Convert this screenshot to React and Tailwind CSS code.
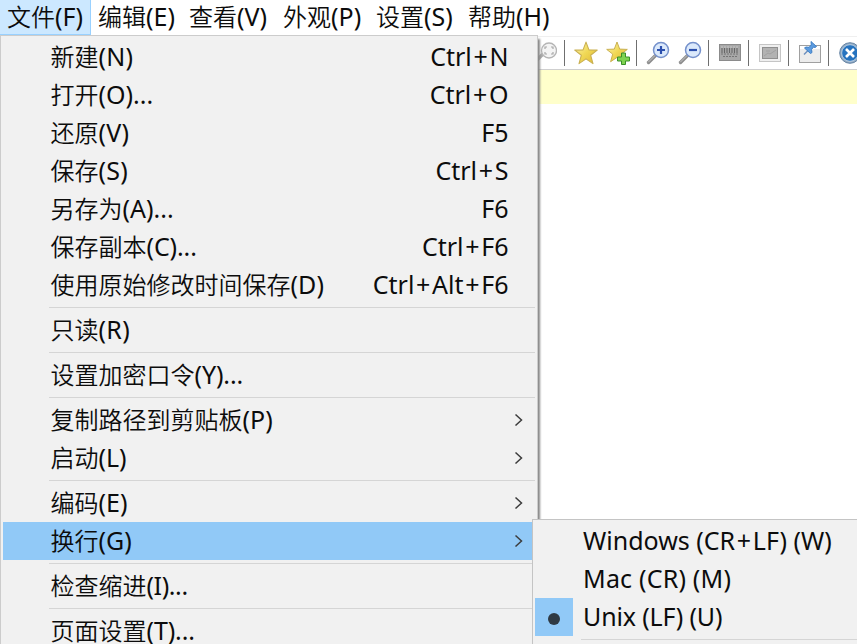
import React from 'react';

const font = "font-['Noto_Sans','Noto_Sans_CJK_SC',sans-serif]";

const menus = [
  { cjk: '文件', key: '(F)', box: 'w-[91px] pl-[7px] bg-[#cce8ff] border-r border-b border-[#99d1ff]' },
  { cjk: '编辑', key: '(E)', box: 'w-[91px] pl-[7px]' },
  { cjk: '查看', key: '(V)', box: 'w-[94px] pl-[7px]' },
  { cjk: '外观', key: '(P)', box: 'w-[93px] pl-[7px]' },
  { cjk: '设置', key: '(S)', box: 'w-[92px] pl-[7px]' },
  { cjk: '帮助', key: '(H)', box: 'w-[96px] pl-[7px]' },
];

const items = [
  { cjk: '新建', key: '(N)', shortcut: 'Ctrl+N', track: 'tracking-[0.3px]' },
  { cjk: '打开', key: '(O)...', shortcut: 'Ctrl+O' },
  { cjk: '还原', key: '(V)', shortcut: 'F5', track: 'tracking-[0.3px]' },
  { cjk: '保存', key: '(S)', shortcut: 'Ctrl+S', track: 'tracking-[0.2px]' },
  { cjk: '另存为', key: '(A)...', shortcut: 'F6' },
  { cjk: '保存副本', key: '(C)...', shortcut: 'Ctrl+F6', track: 'tracking-[-0.1px]' },
  { cjk: '使用原始修改时间保存', key: '(D)', shortcut: 'Ctrl+Alt+F6', track: 'tracking-[0.1px]' },
  null,
  { cjk: '只读', key: '(R)', track: 'tracking-[0.3px]' },
  null,
  { cjk: '设置加密口令', key: '(Y)...', track: 'tracking-[-0.1px]' },
  null,
  { cjk: '复制路径到剪贴板', key: '(P)', sub: true, track: 'tracking-[0.1px]' },
  { cjk: '启动', key: '(L)', sub: true },
  null,
  { cjk: '编码', key: '(E)', sub: true },
  { cjk: '换行', key: '(G)', sub: true, active: true },
  null,
  { cjk: '检查缩进', key: '(I)...', track: 'tracking-[-0.4px]' },
  null,
  { cjk: '页面设置', key: '(T)...', track: 'tracking-[-0.1px]' },
];

function Label({ cjk, k, track = 'tracking-normal' }) {
  return (
    <span className="whitespace-nowrap">
      <span className="font-['Noto_Sans_CJK_SC',sans-serif] font-[350]">{cjk}</span>
      <span className={'text-[25px] ' + track}>{k}</span>
    </span>
  );
}

// The plus sign takes a wider cell than the letters beside it.
function Wide({ text }) {
  return text.split('+').map((part, i) => (
    <React.Fragment key={i}>
      {i > 0 && <span className="mx-[1.7px]">+</span>}
      {part}
    </React.Fragment>
  ));
}

function Star() {
  return (
    <path d="M11 1l2.700 7.100 7.600.3-6 4.700 2.100 7.600-6.400-4.300-6.400 4.300 2.100-7.600-6-4.700 7.600-.3z" fill="url(#gold)" stroke="#c9b052" strokeWidth="1" strokeLinejoin="round" />
  );
}

function Magnifier({ plus }) {
  return (
    <svg className="size-6 shrink-0" viewBox="0 0 24 24">
      <path d="M2.500 21.500l7-7" stroke="#8d8d8d" strokeWidth="3.400" strokeLinecap="round" />
      <path d="M2.500 21l6.500-6.500" stroke="#c5c5c5" strokeWidth="1" strokeLinecap="round" />
      <circle cx="15" cy="9" r="7.500" fill="#dbe9fb" stroke="#7591cc" strokeWidth="1.500" />
      <path d={plus ? 'M11 9h8M15 5v8' : 'M11 9h8'} stroke="#2b4fae" strokeWidth="2.200" />
    </svg>
  );
}

function Divider() {
  return <div className="h-[26px] w-px shrink-0 bg-[#6f6f6f]" />;
}

function Toolbar() {
  return (
    <div className="flex h-[34px] items-center border-t border-b border-t-[#efefef] border-b-[#cfcfcf] bg-white pl-[533px]">
      <svg className="size-6 shrink-0" viewBox="0 0 24 24">
        <path d="M2 21l8-8" stroke="#aaa" strokeWidth="3.400" strokeLinecap="round" />
        <circle cx="16" cy="9.500" r="7.500" fill="#f4f4f4" stroke="#b5b5b5" strokeWidth="1.300" />
        <path d="M12 8V6h2M18 6h2v2M20 11v2h-2M14 13h-2v-2" fill="none" stroke="#a8a8a8" strokeWidth="1.200" />
      </svg>
      <div className="ml-[7px] flex"><Divider /></div>
      <svg className="ml-[9px] size-[24px] shrink-0" viewBox="0 0 22 22">
        <defs>
          <linearGradient id="gold" x1="0" y1="0" x2="1" y2="1">
            <stop offset="0" stopColor="#fdf5b4" />
            <stop offset=".5" stopColor="#f0d855" />
            <stop offset="1" stopColor="#dfb733" />
          </linearGradient>
        </defs>
        <Star />
      </svg>
      <svg className="ml-[8px] size-6 shrink-0" viewBox="0 0 24 24">
        <Star />
        <path d="M15.500 12h4v4h4v4h-4v3.500h-4V20h-4v-4h4z" fill="#7fd350" stroke="#3a9029" />
      </svg>
      <div className="ml-[6px] flex"><Divider /></div>
      <div className="ml-[9px] flex"><Magnifier plus /></div>
      <div className="ml-[8px] flex"><Magnifier /></div>
      <div className="ml-[6px] flex"><Divider /></div>
      <svg className="ml-[10px] h-[18px] w-[22px] shrink-0" viewBox="0 0 22 18">
        <rect x=".5" y=".5" width="21" height="16" fill="#a8a8a8" stroke="#8b8b8b" />
        <path d="M3 4v5M5.500 4v5M8 4v5M10.500 4v5M13 4v5M15.500 4v5M18 4v5" stroke="#666" strokeWidth="1.100" />
        <path d="M2 10h18M4 12.500h14" stroke="#757575" strokeDasharray="2 1" />
        <path d="M2 3h18" stroke="#c5c5c5" strokeDasharray="2 1" />
      </svg>
      <div className="ml-[7px] flex"><Divider /></div>
      <svg className="ml-[10px] h-[19px] w-[23px] shrink-0" viewBox="0 0 23 19">
        <rect x=".5" y=".5" width="21" height="17" fill="#efefef" stroke="#c5c5c5" />
        <rect x="3.500" y="3.500" width="15" height="11" fill="#b2b2b2" stroke="#8f8f8f" />
        <path d="M5 12l4-3 2 1 6-4M7 7h4" fill="none" stroke="#a0a0a0" />
      </svg>
      <div className="ml-[6px] flex"><Divider /></div>
      <svg className="ml-[10px] h-6 w-[23px] shrink-0" viewBox="0 0 23 24">
        <rect x=".5" y="4.500" width="21" height="17" fill="#ececec" stroke="#a0a0a0" />
        <path d="M1 5h20v3H1z" fill="#fff" />
        <path d="M5 13.500l5-5" stroke="#6b8fbd" strokeWidth="1.500" />
        <path d="M12 0.500l5.500 5-1.500 1-1.500-.5-2 2.500.5 3-1.500 1L5.500 7l1.500-1 3 .3L12.300 4z" fill="#5b9be0" stroke="#3f7fc4" strokeLinejoin="round" />
      </svg>
      <div className="ml-[6px] flex"><Divider /></div>
      <svg className="ml-[10px] size-[22px] shrink-0" viewBox="0 0 22 22">
        <circle cx="11" cy="11" r="10.300" fill="#8fa9c3" stroke="#6684a4" />
        <circle cx="11" cy="11" r="8.300" fill="#2673bf" stroke="#d2e2f0" strokeWidth=".7" />
        <path d="M7 7l8 8M15 7l-8 8" stroke="#fff" strokeWidth="2.600" />
      </svg>
    </div>
  );
}

function MenuRow({ item }) {
  if (!item) {
    return (
      <div className="flex h-[7px] shrink-0 items-center pl-[46px]">
        <div className="h-px grow bg-[#d5d5d5]" />
      </div>
    );
  }
  return (
    <div className={'flex h-[38px] shrink-0 items-center pl-[47.5px] ' + (item.active ? 'bg-[#91c9f7]' : '')}>
      <div className="pb-[2px]">
        <Label cjk={item.cjk} k={item.key} track={item.track} />
      </div>
      {item.shortcut && (
        <span className="mr-[26.5px] ml-auto pb-[2px] text-[25px]"><Wide text={item.shortcut} /></span>
      )}
      {item.sub && (
        <svg className="mr-[12px] ml-auto h-[14px] w-[9px]" viewBox="0 0 9 14">
          <path d="M1.500 1.500L7.500 7l-6 5.500" fill="none" stroke="#3c3c3c" strokeWidth="1.500" />
        </svg>
      )}
    </div>
  );
}

const endings = [
  { text: 'Windows (CR+LF) (W)', track: 'tracking-normal' },
  { text: 'Mac (CR) (M)', track: 'tracking-[0.2px]' },
  { text: 'Unix (LF) (U)', track: 'tracking-[-0.150px]', checked: true },
];

export default function App() {
  return (
    <div className={'relative h-[644px] w-[857px] overflow-hidden bg-white text-[24px] leading-[34px] text-[#0c0c0c] ' + font}>
      <div className="flex h-[36px]">
        {menus.map((m) => (
          <div key={m.cjk} className={'h-[35px] shrink-0 leading-[32px] ' + m.box}>
            <Label cjk={m.cjk} k={m.key} />
          </div>
        ))}
      </div>
      <Toolbar />
      <div className="h-[34px] bg-[#ffffcb]" />

      <div className="absolute top-[35px] left-0 flex h-[620px] w-[538px] flex-col border border-[#cccccc] bg-[#f1f1f1] px-[2px] pt-[2px] shadow-[2px_4px_2px_#888]">
        {items.map((item, i) => (
          <MenuRow key={i} item={item} />
        ))}
      </div>

      <div className="absolute top-[519px] left-[532px] flex h-[140px] w-[340px] flex-col border border-[#c4c4c4] bg-[#f1f1f1] px-[2px] pt-[2px]">
        {endings.map((e) => (
          <div key={e.text} className="flex h-[38px] items-center">
            <div className={'mr-[10px] flex size-[38px] items-center justify-center ' + (e.checked ? 'bg-[#91c9f7]' : '')}>
              {e.checked && <div className="mt-[3px] size-3 rounded-full bg-[#2f3a44]" />}
            </div>
            <span className={'pb-[2px] whitespace-nowrap text-[25px] ' + e.track}><Wide text={e.text} /></span>
          </div>
        ))}
        <div className="flex h-[7px] items-center pl-[46px]">
          <div className="h-px grow bg-[#d5d5d5]" />
        </div>
      </div>
    </div>
  );
}
